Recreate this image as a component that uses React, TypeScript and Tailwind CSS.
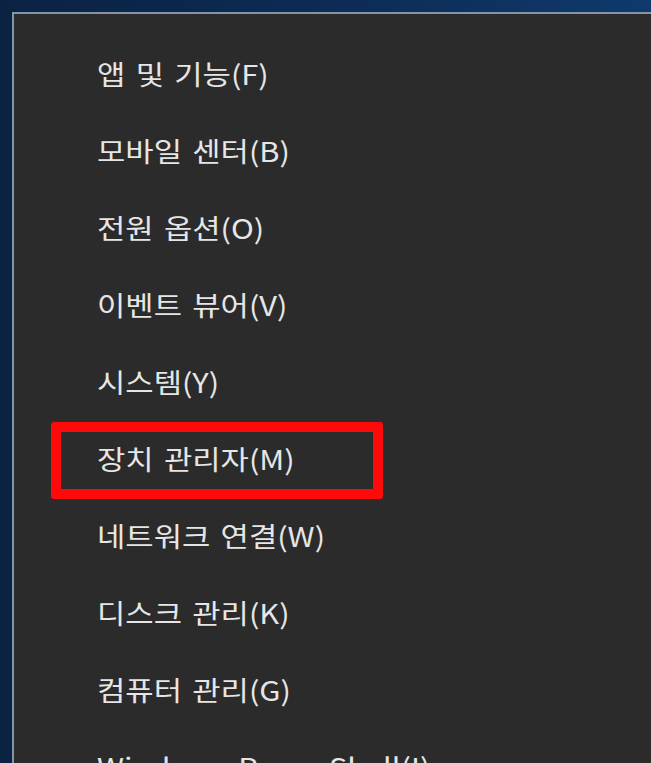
const items = [
  "앱 및 기능(F)",
  "모바일 센터(B)",
  "전원 옵션(O)",
  "이벤트 뷰어(V)",
  "시스템(Y)",
  "장치 관리자(M)",
  "네트워크 연결(W)",
  "디스크 관리(K)",
  "컴퓨터 관리(G)",
  "Windows PowerShell(I)",
];

export default function App() {
  return (
    <div className="flex h-[763px] w-[651px] overflow-hidden bg-gradient-to-r from-[#0b2243] via-[#0c2b55] to-[#0f3a6c] pl-[12px] pt-[12px]">
      <div className="flex-1 overflow-hidden border-l-2 border-t-2 border-[#8393a8] bg-[#2b2b2b] pt-[21px] font-['Noto_Sans_CJK_KR','Noto_Sans',sans-serif] text-[#e6e6e6]">
        {items.map((label, i) => (
          <div key={label} className="relative flex h-[77px] items-center pl-[83px]">
            <span className="inline-block origin-left scale-x-[1.14] text-[27px] leading-none [word-spacing:3px]">
              {label}
            </span>
            {i === 5 && (
              <div className="absolute left-[37px] top-[2px] h-[77px] w-[332px] rounded-[3px] border-[10px] border-[#ff0a0a]" />
            )}
          </div>
        ))}
      </div>
    </div>
  );
}
